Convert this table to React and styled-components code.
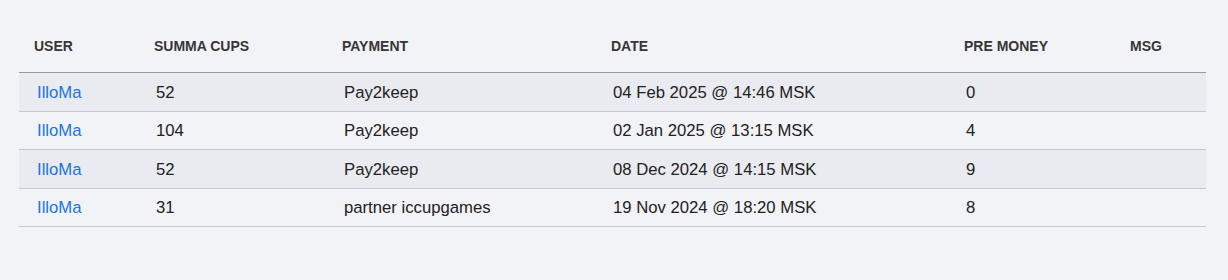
import React from "react";
import styled, { createGlobalStyle } from "styled-components";

const Global = createGlobalStyle`
  html, body { margin: 0; padding: 0; background: #f2f3f7; }
  body { font-family: "Liberation Sans", Arial, sans-serif; }
`;

const Page = styled.div`
  padding: 20px 22px 0 19px;
`;

const Table = styled.table`
  width: 100%;
  border-collapse: collapse;
  table-layout: fixed;
`;

const Th = styled.th`
  box-sizing: border-box;
  width: ${(p) => p.$w}px;
  text-align: left;
  padding: 19px 15px 18px;
  font-size: 14px;
  line-height: 15px;
  font-weight: 700;
  color: #363636;
  text-transform: uppercase;
  border-bottom: 1px solid #999a9e;
  white-space: nowrap;
`;

const Row = styled.tr`
  background: ${(p) => (p.$odd ? "#e9ebf0" : "transparent")};
  border-bottom: 1px solid #c3c8d4;
`;

const Td = styled.td`
  box-sizing: border-box;
  height: 38.5px;
  padding: 1px 17px 0;
  font-size: 16.7px;
  line-height: 19px;
  color: #222;
  vertical-align: middle;
  white-space: nowrap;
`;

const UserLink = styled.a`
  color: #1a75e6;
  text-decoration: none;
  padding-left: 1px;
`;

const cols = [
  ["User", 120],
  ["Summa Cups", 188],
  ["Payment", 269],
  ["Date", 353],
  ["Pre Money", 166],
  ["Msg", 91],
];

const rows = [
  ["52", "Pay2keep", "04 Feb 2025 @ 14:46 MSK", "0"],
  ["104", "Pay2keep", "02 Jan 2025 @ 13:15 MSK", "4"],
  ["52", "Pay2keep", "08 Dec 2024 @ 14:15 MSK", "9"],
  ["31", "partner iccupgames", "19 Nov 2024 @ 18:20 MSK", "8"],
];

export default function App() {
  return (
    <Page>
      <Global />
      <Table>
        <thead>
          <tr>
            {cols.map(([c, w]) => (
              <Th key={c} $w={w}>
                {c}
              </Th>
            ))}
          </tr>
        </thead>
        <tbody>
          {rows.map((r, i) => (
            <Row key={i} $odd={i % 2 === 0}>
              <Td>
                <UserLink href="#">IlloMa</UserLink>
              </Td>
              <Td>{r[0]}</Td>
              <Td>{r[1]}</Td>
              <Td>{r[2]}</Td>
              <Td>{r[3]}</Td>
              <Td />
            </Row>
          ))}
        </tbody>
      </Table>
    </Page>
  );
}
